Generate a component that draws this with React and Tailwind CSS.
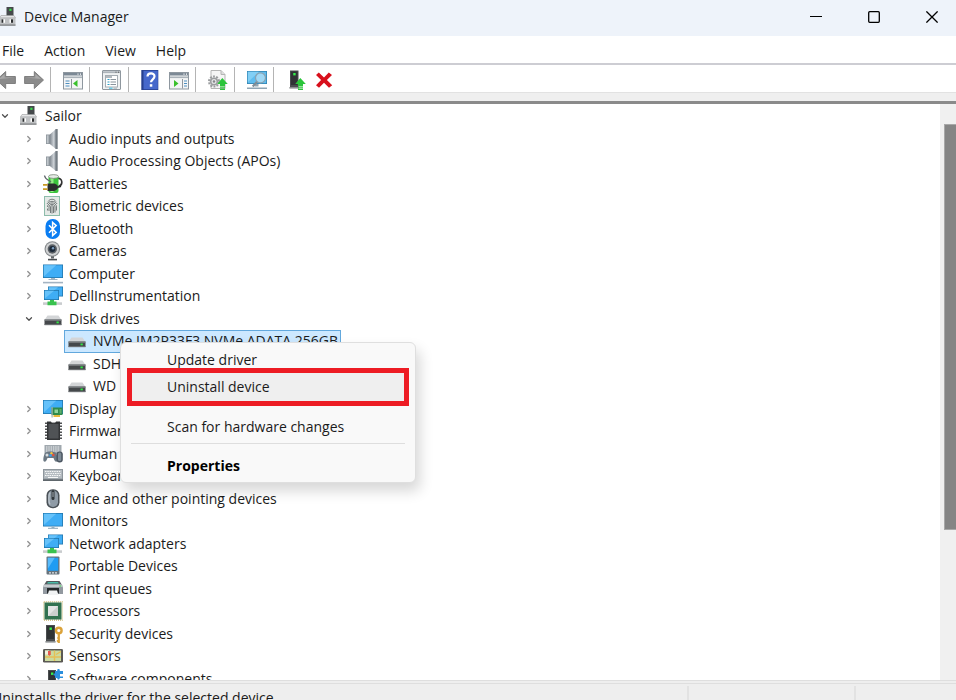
import { ChevronDown, ChevronRight } from 'lucide-react';

const Svg = ({ children, className = 'w-5 h-5' }) => (
  <svg viewBox="0 0 20 20" className={`${className} shrink-0`} aria-hidden="true">
    {children}
  </svg>
);

// Shared icon parts
const Screen = ({ x, y, w, h }) => (
  <>
    <rect x={x} y={y} width={w} height={h} fill="#2277ae" />
    <rect x={x + 0.8} y={y + 0.8} width={w - 1.6} height={h - 1.6} fill="#3fadf5" />
    <path d={`M${x + 0.8} ${y + 0.8}h${w * 0.62}L${x + 0.8} ${y + h - 1.5}z`} fill="#66c2fa" />
  </>
);

const Tower = ({ x = 3, y = 1, w = 8, h = 17 }) => (
  <>
    <rect x={x} y={y} width={w} height={h} fill="#4a4d4f" />
    <rect x={x + 1} y={y + 1} width={w - 2} height={h - 4} fill="#303335" />
    <rect x={x + w / 2 - 1} y={y + 2.5} width="2.4" height="2.4" fill="#35f04a" />
    <rect x={x - 0.6} y={y + h - 1} width={w + 1.2} height="1.6" fill="#8a8d8f" />
  </>
);

const UpArrow = () => (
  <>
    <path d="M14.3 8l5.500 6h-2.800v2.500h-5V14H9.200z" fill="#2bc43a" />
    <path d="M12 17.200h5v1.200h-5zM12 19h5v1h-5z" fill="#2bc43a" />
  </>
);

const MachineIcon = () => (
  <Svg>
    <rect x="8.500" y="0" width="7" height="10" fill="#45494b" />
    <rect x="11.300" y="1.700" width="2.200" height="2.200" fill="#39dd4b" />
    <path d="M3 8.500h13l1.500 2.500H1.500z" fill="#e5e6e7" stroke="#9a9c9e" strokeWidth=".6" />
    <rect x="1" y="10.500" width="16.500" height="8" fill="#bfc1c3" />
    <rect x="1" y="17.400" width="16.500" height="1.400" fill="#85888a" />
    <rect x="3.500" y="12.300" width="3.500" height="3.500" fill="#fff" />
    <rect x="11.500" y="12.300" width="3.500" height="3.500" fill="#fff" />
    <rect x="3.500" y="12.300" width="1.800" height="3.500" fill="#2c2e30" />
    <rect x="13" y="12.300" width="2" height="3.500" fill="#2c2e30" />
  </Svg>
);

const SpeakerIcon = () => (
  <Svg>
    <defs>
      <linearGradient id="cone" x1="0" x2="1" y1="0" y2="0">
        <stop offset="0" stopColor="#7f878f" />
        <stop offset=".6" stopColor="#c9ced3" />
        <stop offset="1" stopColor="#959da4" />
      </linearGradient>
    </defs>
    <path d="M3 5.500h4.500v9.500H3z" fill="#8d959c" />
    <path d="M3.800 6.300h1.800v8H3.800z" fill="#c0c6cb" />
    <path d="M6.800 5.500L13 0v20l-6.200-5z" fill="url(#cone)" />
    <path d="M12.500 0h2.200v20h-2.200z" fill="#757d84" />
  </Svg>
);

const BatteryIcon = () => (
  <Svg>
    <path d="M14.500 4.500c5-1 6 6.500 1 8" fill="none" stroke="#333" strokeWidth="1.600" />
    <rect x="5.500" y="1.500" width="10" height="17.500" rx="2" fill="#3bc33c" />
    <rect x="7.500" y="4" width="3" height="14" fill="#93ec85" />
    <ellipse cx="10.500" cy="2.500" rx="5" ry="1.900" fill="#e6ece6" stroke="#6d7a6d" strokeWidth=".7" />
    <path d="M1.500 1.500c.5 4 4 4.500 6.500 6.500" fill="none" stroke="#60666a" strokeWidth="1.300" />
    <path d="M4.500 9.500h5c4 0 5.500 2 5.500 3.700s-2 3.800-5.500 3.800h-5z" fill="#2b2d2d" />
    <path d="M15 13.200l3-1" stroke="#2b2d2d" strokeWidth="1.800" />
    <path d="M0 10.800h4.500M0 15.200h4.500" stroke="#c99a22" strokeWidth="1.800" />
  </Svg>
);

const FingerprintIcon = () => (
  <Svg>
    <rect x="1.500" y=".5" width="15" height="19" fill="#e4e9e6" stroke="#8dbcab" />
    <g fill="none" stroke="#6a6f70" strokeWidth=".9">
      <path d="M5 5.500c2-3 6-3 8 0M4 8c1.500-3.500 8.500-3.500 10 0M4.500 11c0-5.500 9-5.500 9 0v3.500M6 15v-4c0-3.500 6-3.500 6 0v5.500M7.500 17v-6c0-1.700 3-1.700 3 0v6M9 11v6.500M4.500 12.500v2" />
    </g>
  </Svg>
);

const BluetoothIcon = () => (
  <Svg>
    <rect x="2.500" y="0" width="14.500" height="20" rx="7" fill="#0a7df2" />
    <path d="M6 6.200l7.200 7.200-3.600 3.200V3.400l3.600 3.200L6 13.800" fill="none" stroke="#fff" strokeWidth="1.500" />
  </Svg>
);

const CameraIcon = () => (
  <Svg>
    <path d="M8 14h3v3.500H8z" fill="#63676a" />
    <path d="M5 17.800h9v1.600H5z" fill="#4a4e51" />
    <circle cx="9.300" cy="8" r="7.800" fill="#85898c" />
    <circle cx="9.300" cy="8" r="6.700" fill="#cfd1d2" />
    <circle cx="9.300" cy="8" r="4.700" fill="#5a5f64" />
    <circle cx="9.300" cy="8" r="3" fill="#1c2a3a" />
    <circle cx="10" cy="7.300" r="1.200" fill="#7d9dbd" />
  </Svg>
);

const ComputerIcon = () => (
  <Svg>
    <Screen x={0} y={0.5} w={20} h={13.5} />
    <path d="M8 14h4v1.300H8z" fill="#a6b6c3" />
    <path d="M5.500 15.200h9v.8h-9z" fill="#8ba0b0" />
    <path d="M0 17.800h20v1.600H0z" fill="#a3b3c2" />
  </Svg>
);

const MonitorIcon = () => (
  <Svg>
    <Screen x={0} y={2} w={20} h={13.500} />
    <path d="M8.500 15.500h3v1.500h-3z" fill="#98b4c7" />
    <path d="M5 16.800h10v1H5z" fill="#8ba5b7" />
  </Svg>
);

const NetworkIcon = () => (
  <Svg>
    <Screen x={5} y={0.500} w={15} h={10} />
    <Screen x={1} y={4} w={15} h={10} />
    <path d="M0 16.300h19v2.600H0z" fill="#c9ccce" />
    <path d="M7 14h4v1.500h2.500v3.800h-9v-3.800H7z" fill="#39c24e" />
  </Svg>
);

const DiskIcon = () => (
  <Svg>
    <path d="M4.500 6.500h11l3 4.500h-17z" fill="#d3d5d7" />
    <path d="M1.500 10.500h17v5.500h-17z" fill="#45484b" />
    <path d="M1.500 10.500h17v1.200h-17z" fill="#85898c" />
    <path d="M1.500 15.200h17v1h-17z" fill="#73777a" />
    <rect x="13.500" y="12.500" width="2.300" height="1.800" fill="#30e843" />
  </Svg>
);

const DisplayIcon = () => (
  <Svg>
    <Screen x={0} y={1} w={20} h={14} />
    <path d="M8.500 8.500h11v7.500h-11z" fill="#2f8a4b" />
    <path d="M8.500 8h1.200v10.500H8.500z" fill="#a5b0aa" />
    <path d="M11.500 10.500h3.500v3.500h-3.500z" fill="#8fd49b" />
    <path d="M16.500 10h2v4.500h-2z" fill="#5dae6d" />
    <path d="M10.500 16h6.500v2h-6.500z" fill="#e6b93d" />
  </Svg>
);

const FirmwareIcon = () => (
  <Svg>
    <path d="M2 2.200h17M2 5.200h17M2 8.200h17M2 11.200h17M2 14.200h17M2 17.200h17" stroke="#505254" strokeWidth="1.500" />
    <path d="M4 .5h4c.5 2.500 4.500 2.500 5 0h4v18.500H4z" fill="#323436" />
    <path d="M5.500 3h10v14.500h-10z" fill="#505356" />
  </Svg>
);

const HidIcon = () => (
  <Svg>
    <rect x="1.500" y="1" width="17" height="9" fill="#a0a8ae" />
    <path d="M3 3h14M3 5h14M3 7h14" stroke="#eef0f1" strokeWidth="1.100" strokeDasharray="1.400 .9" />
    <path d="M2.500 8.500c2-1.500 8-1.500 10 0 1.500 1.500 2.500 6 2 8.500-1.500 2-3 0-4-3h-6c-1 3-2.500 5-4 3-.5-2.500.5-7 2-8.500z" fill="#6b7883" />
    <circle cx="4" cy="11" r="1.500" fill="#d8dde0" />
    <circle cx="8.500" cy="9.300" r="1.200" fill="#f4c43a" />
    <circle cx="10.300" cy="11" r="1.300" fill="#e4523d" />
    <circle cx="7.500" cy="11.500" r="1.300" fill="#38a0ef" />
    <rect x="13.500" y="7.500" width="6.300" height="11" rx="3" fill="#4b5661" />
    <rect x="15" y="8.500" width="3.300" height="8.500" rx="1.500" fill="#7d8a95" />
  </Svg>
);

const KeyboardIcon = () => (
  <Svg>
    <rect x="0" y="3" width="20" height="12" fill="#8f979d" />
    <rect x="1" y="4" width="18" height="8.500" fill="#b4bbc0" />
    <path d="M2 5.500h16M2.800 7.500h15M2 9.500h16" stroke="#f7f8f8" strokeWidth="1.200" strokeDasharray="1.500 .8" />
    <path d="M5 11.500h10" stroke="#f7f8f8" />
    <path d="M0 14.200h20" stroke="#5f676c" strokeWidth="1.600" />
  </Svg>
);

const MouseIcon = () => (
  <Svg>
    <rect x="3.500" y=".3" width="13" height="19" rx="6" fill="#4a5157" />
    <rect x="5" y="1.500" width="10" height="16.500" rx="4.800" fill="#8f9ba6" />
    <path d="M7 3.500c-1.500 3-1.500 9 0 12" fill="none" stroke="#bcc5cc" strokeWidth="1.300" />
    <rect x="8.500" y="1" width="3" height="10" rx="1.500" fill="#30363b" />
    <path d="M10 3v5" stroke="#a5adb4" strokeWidth="1" />
  </Svg>
);

const PortableIcon = () => (
  <Svg>
    <rect x="3.500" y=".5" width="13" height="18" rx="1" fill="#67737c" />
    <rect x="4.800" y="1.800" width="10.400" height="13" fill="#1f9cf3" />
    <path d="M4.800 1.800h7l-7 11z" fill="#58bbfb" />
    <path d="M6 16.800h2M9 16.800h2M12 16.800h2" stroke="#dde2e5" strokeWidth="1.200" />
  </Svg>
);

const PrinterIcon = () => (
  <Svg>
    <path d="M3.500 2h13l2.500 4H1z" fill="#54595d" />
    <path d="M5 3h10l.8 1.500H4z" fill="#4bbba9" />
    <path d="M1 5.500h18l1 3v6.500H0V8.500z" fill="#9299a0" />
    <path d="M1 5.500h18l.6 2.500H.4z" fill="#c6cbcf" />
    <path d="M4 9h12v5.500H4z" fill="#24282b" />
    <path d="M6 11.500h8l1.500 4.500h-11z" fill="#f1f3f4" />
    <rect x="16.500" y="6.500" width="1.800" height="1" fill="#37d34a" />
  </Svg>
);

const ProcessorIcon = () => (
  <Svg>
    <rect x=".8" y=".8" width="18.400" height="18.400" fill="none" stroke="#c9b36a" strokeWidth="1.200" strokeDasharray="1 1" />
    <rect x="1.500" y="1.500" width="17" height="17" fill="#327250" />
    <rect x="5" y="5" width="10" height="10" fill="#cccfce" />
    <path d="M5 5h10L5 15z" fill="#e3e5e4" />
  </Svg>
);

const SecurityIcon = () => (
  <Svg>
    <Tower x={3} y={1} w={9} h={17} />
    <circle cx="15.800" cy="6.500" r="2.800" fill="none" stroke="#dba23a" strokeWidth="2.400" />
    <path d="M15.800 9.500v9.500M15.800 17h-2M15.800 14h-1.500" stroke="#dba23a" strokeWidth="2.200" />
  </Svg>
);

const SensorIcon = () => (
  <Svg>
    <rect x="0" y="3" width="20" height="13.500" rx="1.300" fill="#5b5954" />
    <rect x="2" y="4.500" width="16" height="10.500" fill="#cbdba0" />
    <path d="M2 11h16M11.500 4.500V15M13 8.500l5-3" stroke="#e6bf55" strokeWidth="1.400" />
    <path d="M2 4.500h4v4H2z" fill="#eff1dc" />
    <path d="M5 5h2.800v3.200L6.400 10 5 8.500z" fill="#e8574d" />
  </Svg>
);

const SoftwareIcon = () => (
  <Svg>
    <Tower x={5} y={1} w={8} h={17} />
    <path d="M12 2h2.300c-.9-2.800 3.300-2.800 2.400 0H20v3h-3v2.500h3V9h-3.300c.3 2-2.700 2-2.400 0H12V6.500c-2 .5-2-2.500 0-2z" fill="#2b8fdd" />
  </Svg>
);

const ArrowIcon = ({ flip }) => (
  <Svg className={flip ? 'w-5 h-5 -scale-x-100' : 'w-5 h-5'}>
    <path d="M.6 6.500h9.700V1.500l9.200 8.500-9.200 8.500v-5H.6z" fill="#8b8b8b" stroke="#787878" strokeWidth=".9" />
    <path d="M1.500 7.500h9.800V3.800L17 9z" fill="#a9a9a9" />
  </Svg>
);

const PaneIcon = ({ flip }) => (
  <Svg>
    <rect x=".5" y="2.500" width="19" height="16.500" fill="#f4f5f6" stroke="#8e979f" />
    <path d="M1 3h18v2.500H1z" fill="#7c8995" />
    <path d="M14.500 4.200h1M17 4.200h1" stroke="#fff" strokeWidth="1.200" />
    <path d="M1 7.300h18" stroke="#aab2b9" strokeWidth="1.600" />
    {flip ? (
      <>
        <path d="M13.500 9v9.500" stroke="#8e979f" />
        <path d="M15 11h3M15 13.500h3M15 16h3" stroke="#4d8fc0" strokeWidth="1.200" />
        <path d="M5 10l4.500 3.500L5 17z" fill="#3ac02c" />
      </>
    ) : (
      <>
        <path d="M8.500 9v9.500" stroke="#8e979f" />
        <path d="M2.500 11h4M2.500 13.500h4M2.500 16h4" stroke="#4d8fc0" strokeWidth="1.200" />
        <path d="M14.500 10L10 13.500l4.500 3.500z" fill="#3ac02c" />
      </>
    )}
  </Svg>
);

const PropertiesIcon = () => (
  <Svg>
    <rect x=".5" y=".5" width="18" height="19" rx=".5" fill="#eff1f2" stroke="#8f979e" />
    <path d="M1 2.200h17" stroke="#adb4ba" strokeWidth="1.800" />
    <path d="M13.500 2.200h1M16 2.200h1" stroke="#555" />
    <rect x="3.500" y="5.500" width="12" height="11.500" fill="#fff" stroke="#a5adb3" />
    <path d="M4 7h6" stroke="#9aa3aa" strokeWidth="1.500" />
    <path d="M5.500 9.500h2M5.500 12h2M5.500 14.500h2" stroke="#2a9dc5" />
    <path d="M8.500 9.500h5.500M8.500 12h5.500M8.500 14.500h5.500" stroke="#8a949c" />
    <path d="M7 18.200h3.500" stroke="#35bfe6" />
    <path d="M11.500 18.200h3.500" stroke="#adb4ba" />
  </Svg>
);

const HelpIcon = () => (
  <Svg>
    <rect x=".3" y="0" width="17" height="20" fill="#27408f" />
    <rect x="2.500" y=".8" width="14.300" height="18.400" fill="#4668cb" />
    <path d="M6.500 6.500c0-4.200 7-4.200 7-.2 0 3-3.500 3-3.500 6" fill="none" stroke="#fff" strokeWidth="2.200" />
    <rect x="8.800" y="14.200" width="2.500" height="2.500" fill="#fff" />
  </Svg>
);

const UpdateIcon = () => (
  <Svg>
    <path d="M3 .5h10l4 4v14H3z" fill="#f5f5f5" stroke="#b5b5b5" />
    <path d="M13 .5v4h4" fill="#dedede" stroke="#b5b5b5" />
    <circle cx="6" cy="11.500" r="5" fill="none" stroke="#9b9d9f" strokeWidth="2" strokeDasharray="1.900 1.240" />
    <circle cx="6" cy="11.500" r="3.300" fill="#e4e5e6" stroke="#9b9d9f" strokeWidth="1.600" />
    <circle cx="6" cy="11.500" r="1.200" fill="#85878a" />
    <UpArrow />
  </Svg>
);

const ScanIcon = () => (
  <Svg>
    <rect x="0" y="1" width="20" height="13" fill="#3485b2" />
    <rect x=".8" y="1.800" width="18.400" height="11.400" fill="#5fbdef" />
    <path d="M.8 1.800h11l-11 10.500z" fill="#82cff5" />
    <path d="M7.500 14h4v2.500h-4z" fill="#90a4b1" />
    <path d="M0 17.500h20v1.500H0z" fill="#8fa4b3" />
    <path d="M10.200 11.500l-4.500 5" stroke="#7f8c95" strokeWidth="2" />
    <circle cx="13.500" cy="7.800" r="5" fill="#9fd8f5" stroke="#8aa3b2" strokeWidth="1.200" />
  </Svg>
);

const DeviceUpIcon = () => (
  <Svg>
    <Tower x={4} y={0.5} w={8.500} h={17.500} />
    <UpArrow />
  </Svg>
);

const RemoveIcon = () => (
  <Svg>
    <path d="M4.800 2.500L10 7.600l4.800-5.100L18 4.900 12.900 10l5.300 5.200-3.200 2.600-5-5-5 5-3-2.600L7.100 10 2 5z" fill="#d8101c" />
  </Svg>
);

const tree = [
  { label: 'Sailor', Icon: MachineIcon, depth: 0, open: true },
  { label: 'Audio inputs and outputs', Icon: SpeakerIcon, depth: 1 },
  { label: 'Audio Processing Objects (APOs)', Icon: SpeakerIcon, depth: 1 },
  { label: 'Batteries', Icon: BatteryIcon, depth: 1 },
  { label: 'Biometric devices', Icon: FingerprintIcon, depth: 1 },
  { label: 'Bluetooth', Icon: BluetoothIcon, depth: 1 },
  { label: 'Cameras', Icon: CameraIcon, depth: 1 },
  { label: 'Computer', Icon: ComputerIcon, depth: 1 },
  { label: 'DellInstrumentation', Icon: NetworkIcon, depth: 1 },
  { label: 'Disk drives', Icon: DiskIcon, depth: 1, open: true },
  { label: 'NVMe IM2P33F3 NVMe ADATA 256GB', Icon: DiskIcon, depth: 2, selected: true },
  { label: 'SDH', Icon: DiskIcon, depth: 2 },
  { label: 'WD', Icon: DiskIcon, depth: 2 },
  { label: 'Display', Icon: DisplayIcon, depth: 1 },
  { label: 'Firmware', Icon: FirmwareIcon, depth: 1 },
  { label: 'Human', Icon: HidIcon, depth: 1 },
  { label: 'Keyboards', Icon: KeyboardIcon, depth: 1 },
  { label: 'Mice and other pointing devices', Icon: MouseIcon, depth: 1 },
  { label: 'Monitors', Icon: MonitorIcon, depth: 1 },
  { label: 'Network adapters', Icon: NetworkIcon, depth: 1 },
  { label: 'Portable Devices', Icon: PortableIcon, depth: 1 },
  { label: 'Print queues', Icon: PrinterIcon, depth: 1 },
  { label: 'Processors', Icon: ProcessorIcon, depth: 1 },
  { label: 'Security devices', Icon: SecurityIcon, depth: 1 },
  { label: 'Sensors', Icon: SensorIcon, depth: 1 },
  { label: 'Software components', Icon: SoftwareIcon, depth: 1 },
];

const indents = ['pl-0', 'pl-6', 'pl-12'];

const toolGroups = [
  [
    { name: 'Back', icon: <ArrowIcon flip /> },
    { name: 'Forward', icon: <ArrowIcon /> },
  ],
  [{ name: 'Show or hide console tree', icon: <PaneIcon /> }],
  [{ name: 'Properties', icon: <PropertiesIcon /> }],
  [
    { name: 'Help', icon: <HelpIcon /> },
    { name: 'Show or hide action pane', icon: <PaneIcon flip /> },
  ],
  [{ name: 'Update driver', icon: <UpdateIcon /> }],
  [{ name: 'Scan for hardware changes', icon: <ScanIcon /> }],
  [
    { name: 'Enable device', icon: <DeviceUpIcon /> },
    { name: 'Uninstall device', icon: <RemoveIcon /> },
  ],
];

const TitleBar = () => (
  <header className="flex h-9 shrink-0 items-center bg-[#eef3fa] pb-0.5">
    <div className="-ml-0.5 flex items-center gap-1.5">
      <MachineIcon />
      <h1>Device Manager</h1>
    </div>
    <div className="ml-auto flex gap-2.5">
      <button aria-label="Minimize" className="flex h-8 w-12 items-center justify-center">
        <svg width="12" height="12" stroke="#000" shapeRendering="crispEdges"><path d="M0 5.500h12" /></svg>
      </button>
      <button aria-label="Maximize" className="flex h-8 w-12 items-center justify-center">
        <svg width="12" height="12" fill="none" stroke="#000" strokeWidth="1.300"><rect x=".7" y=".7" width="10.600" height="10.600" rx="1" /></svg>
      </button>
      <button aria-label="Close" className="flex h-8 w-12 items-center justify-center">
        <svg width="12" height="12" stroke="#000" strokeWidth="1.300"><path d="M.4.4l11.200 11.200M11.600.4L.4 11.600" /></svg>
      </button>
    </div>
  </header>
);

const MenuBar = () => (
  <nav className="flex h-[29px] shrink-0 items-center gap-5 border-b-2 border-[#cdcdd3] pl-0.5 pt-0.5">
    {['File', 'Action', 'View', 'Help'].map((item) => (
      <button key={item}>{item}</button>
    ))}
  </nav>
);

const Toolbar = () => (
  <div className="shrink-0 border-b-3 border-[#8a8a8a] bg-[#efefef] pb-2">
    <div className="flex h-7 items-center border-b border-[#e2e2e2] bg-white pt-0.5">
      {toolGroups.map((group, i) => (
        <div key={i} className="flex items-center">
          {i > 0 && <span className="ml-1.5 mr-3 h-[25px] w-px bg-[#b4b4b4]" />}
          <div className={i === 0 ? '-ml-1 flex gap-2' : 'flex gap-2'}>
            {group.map((tool) => (
              <button key={tool.name} aria-label={tool.name}>{tool.icon}</button>
            ))}
          </div>
        </div>
      ))}
    </div>
  </div>
);

const TreeRow = ({ label, Icon, depth, open, selected }) => (
  <li className={`flex items-center ${indents[depth]}`}>
    <span className="flex w-2.5 shrink-0 justify-center">
      {depth < 2 && (open
        ? <ChevronDown className="h-2.5 w-2.5 shrink-0 text-[#505050]" strokeWidth={3} />
        : <ChevronRight className="h-2.5 w-2.5 shrink-0 text-[#8f8f8f]" strokeWidth={3} />)}
    </span>
    <div
      className={`ml-1.5 flex h-full items-center gap-1.5 border px-0.5 ${
        selected ? 'border-[#62a8dd] bg-[#cce8ff]' : 'border-transparent'
      }`}
    >
      <Icon />
      <span className="whitespace-nowrap">{label}</span>
    </div>
  </li>
);

const ContextMenu = () => (
  <div
    role="menu"
    className="absolute left-[120px] top-[238px] flex w-[296px] flex-col rounded-md border border-[#dfdfdf] bg-[#f9f9f9] pt-[9px] shadow-[4px_8px_14px_rgba(0,0,0,0.16)]"
  >
    <button role="menuitem" className="h-4 pl-[46px] text-left leading-4">Update driver</button>
    <button role="menuitem" className="mx-1.5 h-[38px] border-[5px] border-[#ed1c24] bg-[#efefef] pl-[35px] text-left">
      Uninstall device
    </button>
    <button role="menuitem" className="mt-1 h-[33px] pl-[46px] text-left">Scan for hardware changes</button>
    <hr className="mx-2.5 border-[#dedede]" />
    <button role="menuitem" className="mt-[5px] h-[33px] pl-[46px] text-left font-bold text-black">Properties</button>
  </div>
);

export default function App() {
  return (
    <div className="flex h-screen flex-col overflow-hidden bg-white font-['Open_Sans',sans-serif] text-sm text-[#1b1b1b]">
      <TitleBar />
      <MenuBar />
      <Toolbar />

      <main className="relative flex min-h-0 flex-1 overflow-hidden">
        {/* Equal rows, so the tree keeps an even rhythm */}
        <ul className="mt-px grid h-[585px] min-w-0 flex-1 auto-rows-fr">
          {tree.map((node) => (
            <TreeRow key={node.label} {...node} />
          ))}
        </ul>
        <div className="w-4 shrink-0 bg-[#f0f0f0] pl-1 pt-5">
          <div className="h-[73%] border border-r-0 border-[#a8a8a8] bg-[#858585]" />
        </div>
        <ContextMenu />
      </main>

      <footer className="flex h-5 shrink-0 border-t-4 border-double border-[#dedede] bg-[#eeeeee]">
        <p className="-ml-2 flex-1 whitespace-nowrap pt-1 leading-5">Uninstalls the driver for the selected device.</p>
        <div className="mt-0.5 w-[167px] border-l-2 border-[#e2e2e2]" />
        <div className="mt-0.5 w-[102px] border-l-2 border-[#e2e2e2]" />
      </footer>
    </div>
  );
}
